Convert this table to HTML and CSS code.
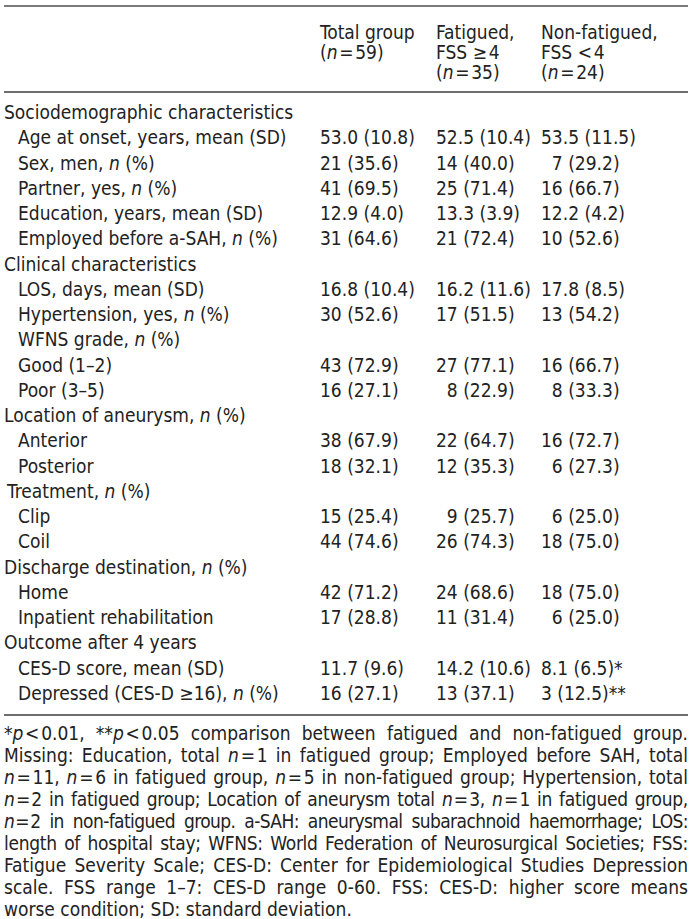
FILE: index.html
```html
<!DOCTYPE html>
<html lang="en">
<head>
<meta charset="utf-8">
<title>Table</title>
<link rel="stylesheet" href="styles.css">
</head>
<body>
<div class="page">
  <table class="tbl">
    <colgroup>
      <col class="c-label">
      <col class="c-total">
      <col class="c-fat">
      <col class="c-non">
    </colgroup>
    <thead>
      <tr>
        <th></th>
        <th>Total group<br>(<i>n</i>&#8202;=&#8202;59)</th>
        <th>Fatigued,<br>FSS &#8805;&#8202;4<br>(<i>n</i>&#8202;=&#8202;35)</th>
        <th>Non-fatigued,<br>FSS &lt;&#8202;4<br>(<i>n</i>&#8202;=&#8202;24)</th>
      </tr>
    </thead>
    <tbody>
      <tr class="first"><td class="sec">Sociodemographic characteristics</td><td></td><td></td><td></td></tr>
      <tr><td class="sub">Age at onset, years, mean (SD)</td><td>53.0 (10.8)</td><td>52.5 (10.4)</td><td>53.5 (11.5)</td></tr>
      <tr><td class="sub">Sex, men, <i>n</i> (%)</td><td>21 (35.6)</td><td>14 (40.0)</td><td>&#8199;7 (29.2)</td></tr>
      <tr><td class="sub">Partner, yes, <i>n</i> (%)</td><td>41 (69.5)</td><td>25 (71.4)</td><td>16 (66.7)</td></tr>
      <tr><td class="sub">Education, years, mean (SD)</td><td>12.9 (4.0)</td><td>13.3 (3.9)</td><td>12.2 (4.2)</td></tr>
      <tr><td class="sub">Employed before a-SAH, <i>n</i> (%)</td><td>31 (64.6)</td><td>21 (72.4)</td><td>10 (52.6)</td></tr>
      <tr><td class="sec">Clinical characteristics</td><td></td><td></td><td></td></tr>
      <tr><td class="sub">LOS, days, mean (SD)</td><td>16.8 (10.4)</td><td>16.2 (11.6)</td><td>17.8 (8.5)</td></tr>
      <tr><td class="sub">Hypertension, yes, <i>n</i> (%)</td><td>30 (52.6)</td><td>17 (51.5)</td><td>13 (54.2)</td></tr>
      <tr><td class="sub">WFNS grade, <i>n</i> (%)</td><td></td><td></td><td></td></tr>
      <tr><td class="sub">Good (1&#8211;2)</td><td>43 (72.9)</td><td>27 (77.1)</td><td>16 (66.7)</td></tr>
      <tr><td class="sub">Poor (3&#8211;5)</td><td>16 (27.1)</td><td>&#8199;8 (22.9)</td><td>&#8199;8 (33.3)</td></tr>
      <tr><td class="sec">Location of aneurysm, <i>n</i> (%)</td><td></td><td></td><td></td></tr>
      <tr><td class="sub">Anterior</td><td>38 (67.9)</td><td>22 (64.7)</td><td>16 (72.7)</td></tr>
      <tr><td class="sub">Posterior</td><td>18 (32.1)</td><td>12 (35.3)</td><td>&#8199;6 (27.3)</td></tr>
      <tr><td class="sec sec-sp">Treatment, <i>n</i> (%)</td><td></td><td></td><td></td></tr>
      <tr><td class="sub">Clip</td><td>15 (25.4)</td><td>&#8199;9 (25.7)</td><td>&#8199;6 (25.0)</td></tr>
      <tr><td class="sub">Coil</td><td>44 (74.6)</td><td>26 (74.3)</td><td>18 (75.0)</td></tr>
      <tr><td class="sec">Discharge destination, <i>n</i> (%)</td><td></td><td></td><td></td></tr>
      <tr><td class="sub">Home</td><td>42 (71.2)</td><td>24 (68.6)</td><td>18 (75.0)</td></tr>
      <tr><td class="sub">Inpatient rehabilitation</td><td>17 (28.8)</td><td>11 (31.4)</td><td>&#8199;6 (25.0)</td></tr>
      <tr><td class="sec">Outcome after 4 years</td><td></td><td></td><td></td></tr>
      <tr><td class="sub">CES-D score, mean (SD)</td><td>11.7 (9.6)</td><td>14.2 (10.6)</td><td>8.1 (6.5)*</td></tr>
      <tr class="last"><td class="sub">Depressed (CES-D &#8805;16), <i>n</i> (%)</td><td>16 (27.1)</td><td>13 (37.1)</td><td>3 (12.5)**</td></tr>
    </tbody>
  </table>
  <div class="notes">
    <div class="fl">*<i>p</i>&#8202;&lt;&#8202;0.01, **<i>p</i>&#8202;&lt;&#8202;0.05 comparison between fatigued and non-fatigued group.</div>
    <div class="fl">Missing: Education, total <i>n</i>&#8202;=&#8202;1 in fatigued group; Employed before SAH, total</div>
    <div class="fl"><i>n</i>&#8202;=&#8202;11, <i>n</i>&#8202;=&#8202;6 in fatigued group, <i>n</i>&#8202;=&#8202;5 in non-fatigued group; Hypertension, total</div>
    <div class="fl tight1"><i>n</i>&#8202;=&#8202;2 in fatigued group; Location of aneurysm total <i>n</i>&#8202;=&#8202;3, <i>n</i>&#8202;=&#8202;1 in fatigued group,</div>
    <div class="fl tight2"><i>n</i>&#8202;=&#8202;2 in non-fatigued group. a-SAH: aneurysmal subarachnoid haemorrhage; LOS:</div>
    <div class="fl tight1">length of hospital stay; WFNS: World Federation of Neurosurgical Societies; FSS:</div>
    <div class="fl">Fatigue Severity Scale; CES-D: Center for Epidemiological Studies Depression</div>
    <div class="fl">scale. FSS range 1&#8211;7: CES-D range 0-60. FSS: CES-D: higher score means</div>
    <div class="fl last-line">worse condition; SD: standard deviation.</div>
  </div>
</div>
</body>
</html>
```

FILE: styles.css
```css
html, body {
  margin: 0;
  padding: 0;
  background: #ffffff;
}

.page {
  width: 684px;
  padding: 5px 0 0 4px;
  font-family: "DejaVu Sans", Verdana, sans-serif;
  font-stretch: condensed;
  font-size: 19px;
  color: #222222;
}

.tbl {
  width: 684px;
  border-collapse: collapse;
  table-layout: fixed;
  border-top: 2px solid #7a7a7a;
  border-bottom: 2px solid #6e6e6e;
}

.c-label { width: 316px; }
.c-total { width: 116px; }
.c-fat { width: 105px; }
.c-non { width: 147px; }

.tbl th {
  font-weight: normal;
  text-align: left;
  vertical-align: top;
  line-height: 20px;
  padding: 15px 0 9px 0;
  white-space: nowrap;
  border-bottom: 2px solid #6e6e6e;
}

.tbl td {
  padding: 0;
  line-height: 25.25px;
  white-space: nowrap;
  vertical-align: middle;
}

.tbl tr.first td { padding-top: 7px; }
.tbl tr.last td { padding-bottom: 8px; }

.sec { padding-left: 0; }
.tbl td.sub { padding-left: 14px; }
.tbl td.sec-sp { padding-left: 3px; }

.notes {
  padding-top: 6px;
  width: 684px;
}

.fl {
  line-height: 22px;
  text-align: justify;
  text-align-last: justify;
  white-space: normal;
}

.fl.tight1 { letter-spacing: -0.3px; }
.fl.tight2 { letter-spacing: -0.6px; word-spacing: -2px; }

.fl.last-line { text-align-last: left; }
```
